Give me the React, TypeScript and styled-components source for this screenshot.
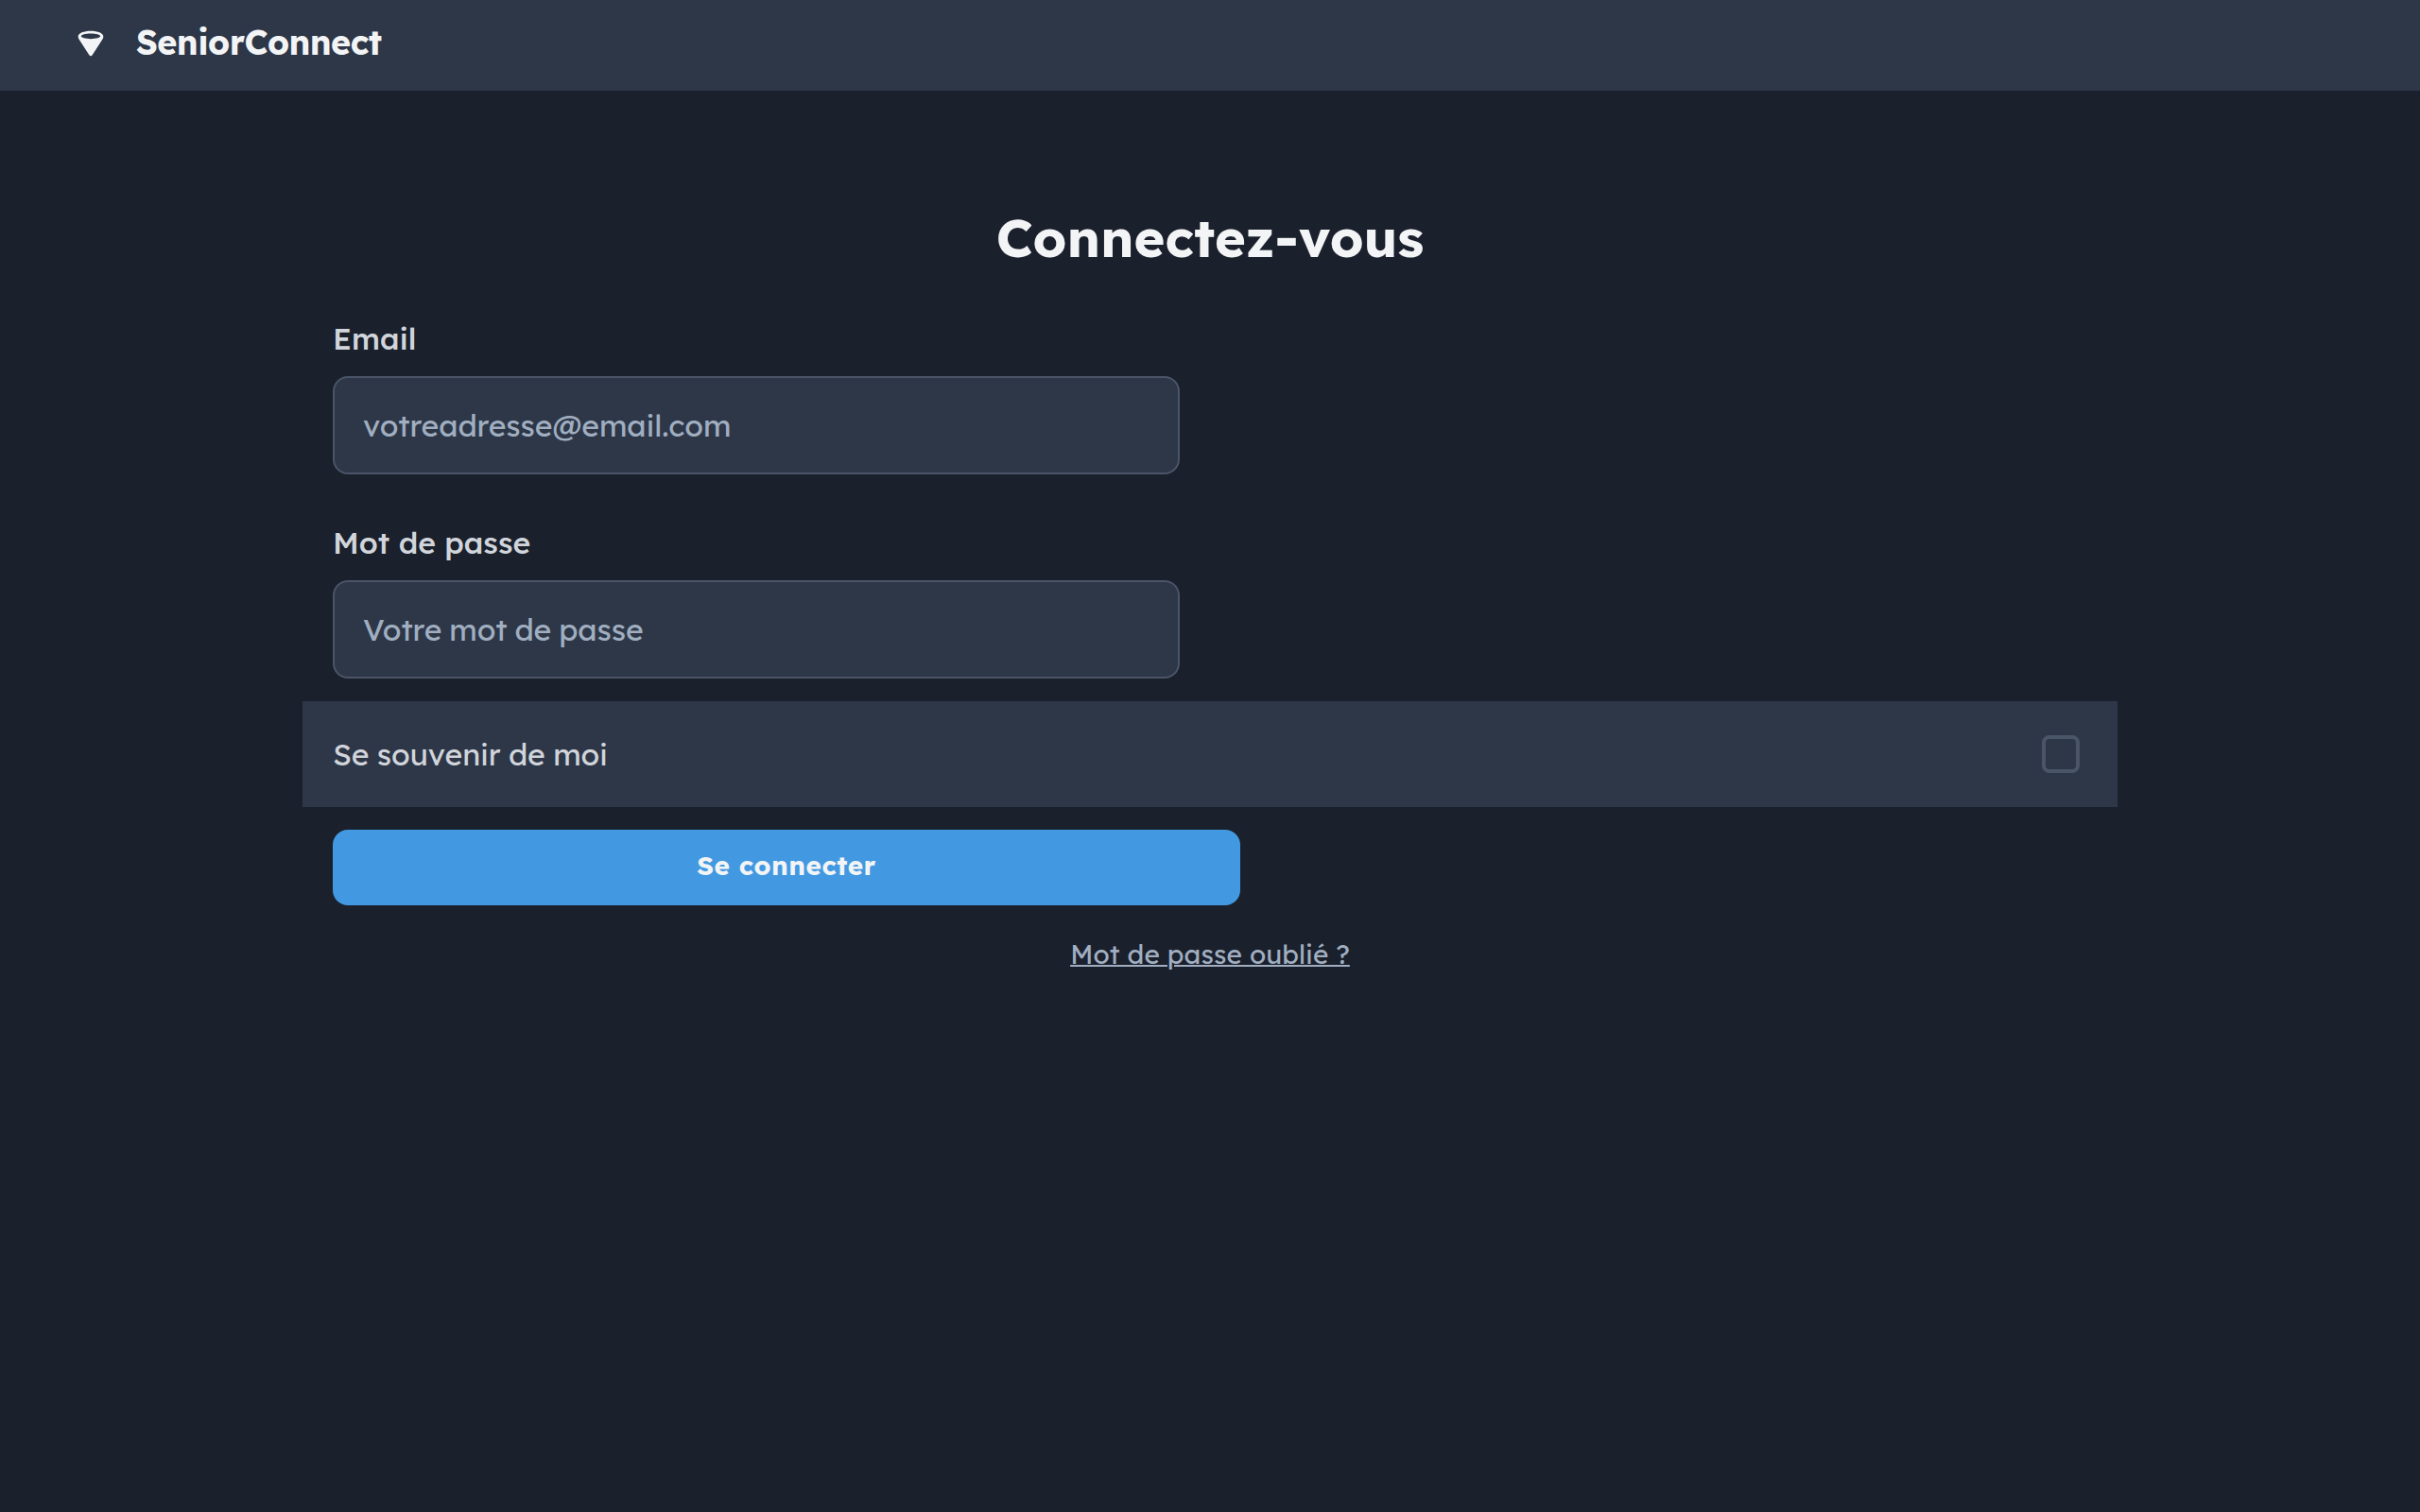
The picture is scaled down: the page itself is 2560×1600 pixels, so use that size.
import React from "react";
import styled, { createGlobalStyle } from "styled-components";

const GlobalStyle = createGlobalStyle`
  * { box-sizing: border-box; }
  body {
    margin: 0;
    background: #1a202c;
    color: #f3f4f6;
    font-family: Lexend, "Noto Sans", sans-serif;
  }
`;

const Page = styled.div`
  display: flex;
  flex-direction: column;
  min-height: 1600px;
  background: #1a202c;
`;

const Header = styled.header`
  display: flex;
  align-items: center;
  gap: 32px;
  height: 96px;
  padding: 0 80px 7px;
  background: #2d3748;
`;

const Logo = styled.svg`
  width: 32px;
  height: 32px;
  margin-top: 2px;
  color: #f3f4f6;
`;

const Brand = styled.h2`
  margin: 0;
  font-size: 36px;
  font-weight: 700;
  line-height: 45px;
  letter-spacing: -0.54px;
`;

const Content = styled.main`
  display: flex;
  flex-direction: column;
  width: 1920px;
  margin: 0 auto;
  padding: 80px 0;
`;

const Title = styled.h1`
  margin: 0;
  padding: 40px 32px 24px;
  font-size: 56px;
  font-weight: 700;
  line-height: 70px;
  text-align: center;
`;

const Field = styled.label`
  display: flex;
  flex-direction: column;
  width: 960px;
  padding: 24px 32px;
`;

const FieldLabel = styled.span`
  padding-bottom: 16px;
  color: #d1d5db;
  font-size: 32px;
  font-weight: 500;
  line-height: 48px;
`;

const Input = styled.input<{ $tracking: number; $wordGap?: number }>`
  height: 104px;
  padding: 0 30px;
  border: 2px solid #4a5568;
  border-radius: 16px;
  outline: none;
  background: #2d3748;
  color: #f3f4f6;
  font: 400 32px/48px Lexend, "Noto Sans", sans-serif;
  letter-spacing: ${(p) => p.$tracking}px;
  word-spacing: ${(p) => p.$wordGap ?? 0}px;
  &::placeholder { color: #a0aec0; opacity: 1; }
`;

const RememberRow = styled.label`
  display: flex;
  align-items: center;
  justify-content: space-between;
  height: 112px;
  padding: 0 40px 0 32px;
  background: #2d3748;
`;

const RememberText = styled.span`
  color: #d1d5db;
  font-size: 32px;
  line-height: 48px;
  letter-spacing: -0.14px;
  word-spacing: -0.4px;
`;

const Checkbox = styled.input`
  appearance: none;
  width: 40px;
  height: 40px;
  margin: 0;
  border: 4px solid #4a5568;
  border-radius: 8px;
  background: transparent;
`;

const Actions = styled.div`
  display: flex;
  padding: 24px 32px;
`;

const SubmitButton = styled.button`
  width: 960px;
  height: 80px;
  padding: 0 32px 4px;
  border: 0;
  border-radius: 16px;
  background: #4299e1;
  color: #f3f4f6;
  font: 700 28px/42px Lexend, "Noto Sans", sans-serif;
  letter-spacing: 0.48px;
`;

const ForgotLink = styled.a`
  align-self: center;
  padding-top: 7px;
  color: #a0aec0;
  font-size: 28px;
  line-height: 42px;
  letter-spacing: 0.1px;
  text-decoration: underline;
  text-decoration-thickness: 2px;
`;

export default function App() {
  return (
    <Page>
      <GlobalStyle />
      <Header>
        <Logo viewBox="0 0 48 48" fill="currentColor" aria-hidden="true">
          <path
            fillRule="evenodd"
            d="M24 4C13 4 4 7.400 4 12.600C4 14.500 4.500 15.700 5.300 17.200L21.500 42.500C22.700 44.500 25.300 44.500 26.500 42.500L42.700 17.200C43.500 15.700 44 14.500 44 12.600C44 7.400 35 4 24 4ZM24 8.300C32.500 8.300 39.300 10.200 39.300 12.500C39.300 14.800 32.500 16.700 24 16.700C15.500 16.700 8.700 14.800 8.700 12.500C8.700 10.200 15.500 8.300 24 8.300Z"
          />
        </Logo>
        <Brand>SeniorConnect</Brand>
      </Header>
      <Content>
        <Title>Connectez-vous</Title>
        <Field>
          <FieldLabel>Email</FieldLabel>
          <Input type="email" placeholder="votreadresse@email.com" $tracking={-0.1} />
        </Field>
        <Field>
          <FieldLabel>Mot de passe</FieldLabel>
          <Input type="password" placeholder="Votre mot de passe" $tracking={-0.12} $wordGap={-0.8} />
        </Field>
        <RememberRow>
          <RememberText>Se souvenir de moi</RememberText>
          <Checkbox type="checkbox" />
        </RememberRow>
        <Actions>
          <SubmitButton type="button">Se connecter</SubmitButton>
        </Actions>
        <ForgotLink>Mot de passe oublié ?</ForgotLink>
      </Content>
    </Page>
  );
}
